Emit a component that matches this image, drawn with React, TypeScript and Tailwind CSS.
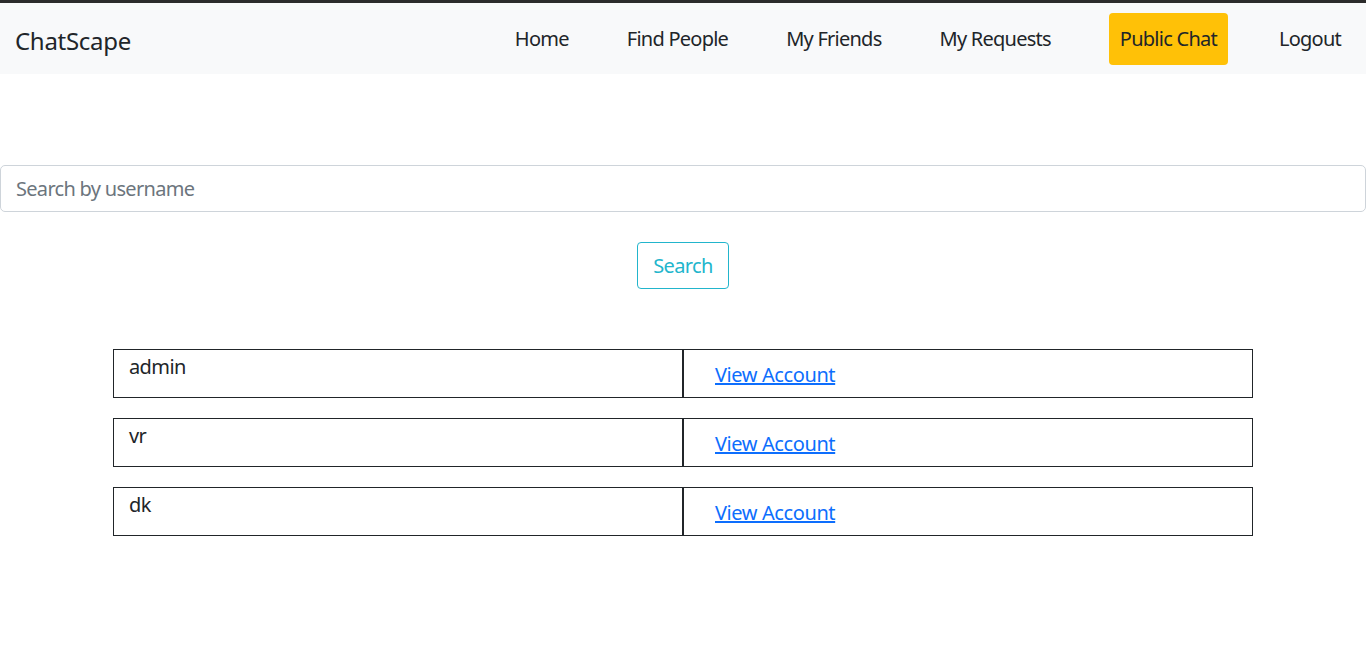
import React from 'react';

const links = ['Home', 'Find People', 'My Friends', 'My Requests'];
const users = ['admin', 'vr', 'dk'];

export default function App() {
  return (
    <div className="min-h-[657px] bg-white text-[#212529] font-['Noto_Sans',sans-serif] tracking-[-0.6px]">
      <div className="h-[3px] bg-[#2b2b2b]" />
      <nav className="flex h-[71px] items-center bg-[#f8f9fa] pl-[15px] pr-[25px]">
        <span className="pt-[4px] text-[24px] leading-none tracking-[-0.3px]">ChatScape</span>
        <ul className="ml-auto flex items-center text-[20px] tracking-[-0.75px]">
          {links.map((l) => (
            <li key={l} className="mr-[58px] leading-[30px]">{l}</li>
          ))}
          <li className="mr-[51px] rounded-[4px] bg-[#ffc107] px-[11px] py-[11px] leading-[30px]">Public Chat</li>
          <li className="leading-[30px]">Logout</li>
        </ul>
      </nav>

      <div className="mt-[91px]">
        <input
          placeholder="Search by username"
          className="block h-[47px] w-full rounded-[5px] border border-[#ced4da] px-[15px] text-[20px] tracking-[-0.7px] placeholder:text-[#6c757d] outline-none"
        />
      </div>

      <div className="mt-[30px] flex justify-center">
        <button className="h-[47px] rounded-[4px] border border-[#22b5cc] px-[15px] text-[20px] text-[#22b5cc]">
          Search
        </button>
      </div>

      <div className="mx-auto mt-[60px] flex w-[1140px] flex-col gap-[20px]">
        {users.map((u) => (
          <div key={u} className="flex h-[49px] text-[20px]">
            <div className="w-[570px] border border-[#212529] pl-[15px] pt-[2px] leading-[30px]">{u}</div>
            <div className="flex-1 border border-[#212529] pl-[31px] pt-[10px] leading-[30px]">
              <a href="#" className="text-[#0d6efd] underline tracking-[-0.4px]">View Account</a>
            </div>
          </div>
        ))}
      </div>
    </div>
  );
}
